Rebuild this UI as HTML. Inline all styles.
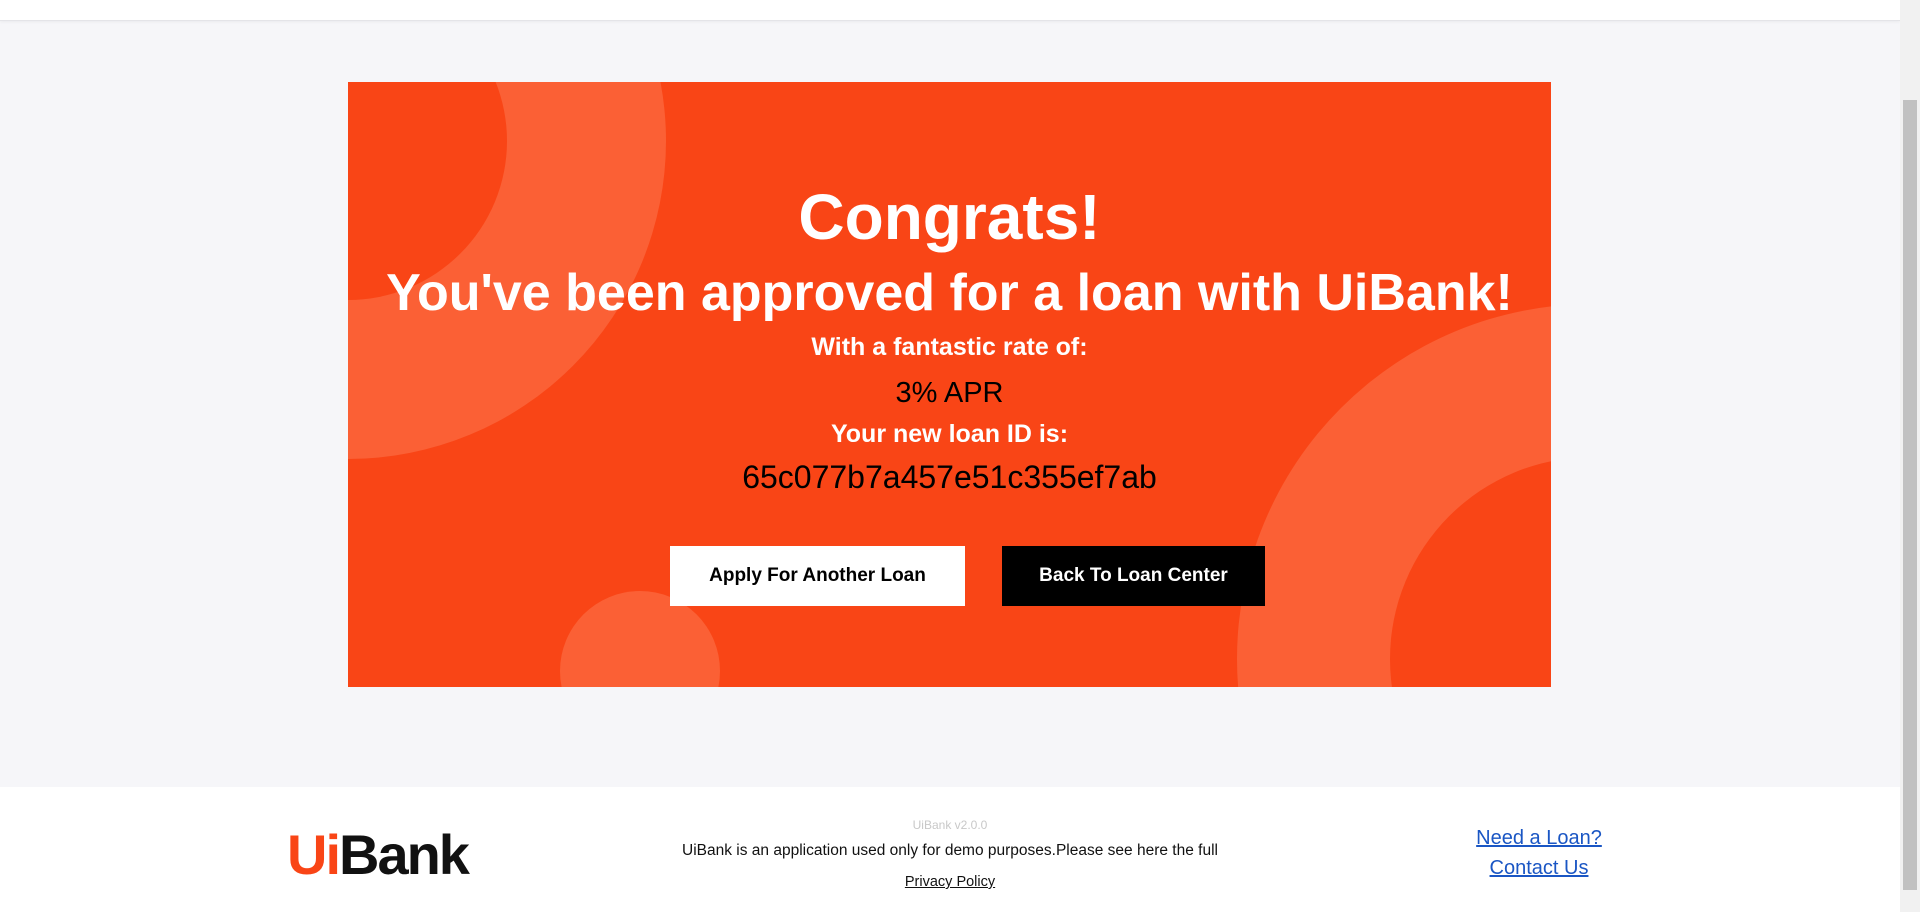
<!DOCTYPE html>
<html><head><meta charset="utf-8">
<style>
*{margin:0;padding:0;box-sizing:border-box}
html,body{width:1920px;height:912px;overflow:hidden;background:#f6f6f9;font-family:"Liberation Sans",sans-serif}
.top{position:absolute;left:0;top:0;width:1900px;height:21px;background:#fff;border-bottom:1px solid #e4e4e8;box-shadow:0 1px 3px rgba(0,0,0,.05)}
.sb{position:absolute;right:0;top:0;width:20px;height:912px;background:#f1f1f1}
.sb .th{position:absolute;left:3px;top:100px;width:14px;height:790px;background:#c1c1c1}
.card{position:absolute;left:348px;top:82px;width:1203px;height:605px;background:#f94516;overflow:hidden}
.c{position:absolute;border-radius:50%}
.t{position:absolute;left:0;width:1203px;text-align:center;white-space:nowrap}
.btn{position:absolute;top:464px;height:60px;font-weight:bold;font-size:19px;line-height:60px;text-align:center}
.foot{position:absolute;left:0;top:787px;width:1900px;height:125px;background:#fff}
.ft{position:absolute;text-align:center;white-space:nowrap}
a{color:#1a56c4;text-decoration:underline}
</style></head><body>
<div class="top"></div>
<div class="card">
 <div class="c" style="left:-318px;top:-259px;width:636px;height:636px;background:#fb6035"></div>
 <div class="c" style="left:-159px;top:-100px;width:318px;height:318px;background:#f94516"></div>
 <div class="c" style="left:889px;top:222px;width:710px;height:710px;background:#fb6035"></div>
 <div class="c" style="left:1042px;top:375px;width:404px;height:404px;background:#f94516"></div>
 <div class="c" style="left:212px;top:509px;width:160px;height:160px;background:#fb6035"></div>
 <div class="t" style="top:98px;font-size:64px;font-weight:bold;color:#fff">Congrats!</div>
 <div class="t" style="top:181px;font-size:52px;font-weight:bold;color:#fff">You've been approved for a loan with UiBank!</div>
 <div class="t" style="top:251px;font-size:25px;font-weight:bold;color:#fff">With a fantastic rate of:</div>
 <div class="t" style="top:295px;font-size:29px;color:#000">3% APR</div>
 <div class="t" style="top:338px;font-size:25px;font-weight:bold;color:#fff">Your new loan ID is:</div>
 <div class="t" style="top:377px;font-size:32px;color:#000">65c077b7a457e51c355ef7ab</div>
 <div class="btn" style="left:322px;width:295px;background:#fff;color:#000">Apply For Another Loan</div>
 <div class="btn" style="left:654px;width:263px;background:#000;color:#fff">Back To Loan Center</div>
</div>
<div class="foot">
 <div class="ft" style="left:287px;top:38px;font-size:56px;font-weight:bold;letter-spacing:-2px;line-height:60px"><span style="color:#f94516">Ui</span><span style="color:#111">Bank</span></div>
 <div class="ft" style="left:650px;width:600px;top:31px;font-size:12px;color:#c8c8c8">UiBank v2.0.0</div>
 <div class="ft" style="left:650px;width:600px;top:55px;font-size:15.5px;color:#111">UiBank is an application used only for demo purposes.Please see here the full</div>
 <div class="ft" style="left:650px;width:600px;top:87px;font-size:14.5px;color:#111;text-decoration:underline">Privacy Policy</div>
 <div class="ft" style="left:1439px;width:200px;top:40px;font-size:20px"><a>Need a Loan?</a></div>
 <div class="ft" style="left:1439px;width:200px;top:70px;font-size:20px"><a>Contact Us</a></div>
</div>
<div class="sb"><div class="th"></div></div>
</body></html>
